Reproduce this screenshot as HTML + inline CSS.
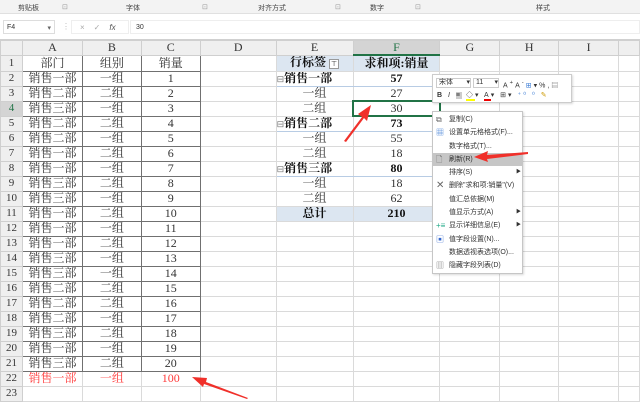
<!DOCTYPE html>
<html><head><meta charset="utf-8"><style>
*{margin:0;padding:0;box-sizing:border-box}
body{width:640px;height:406px;overflow:hidden;background:#fff;position:relative;font-family:"Liberation Serif","Noto Serif CJK SC",serif}
.rib{position:absolute;left:0;top:0;width:640px;height:14px;background:#f3f3f3;border-bottom:1px solid #e0e0e0;font:7px "Liberation Sans","Noto Sans CJK SC",sans-serif;color:#444}
.rib span{position:absolute;top:3px}
.fb{position:absolute;left:0;top:14px;width:640px;height:26px;background:#fff;border-bottom:1px solid #d0d0d0}
table{position:absolute;left:0;top:40px;border-collapse:collapse;table-layout:fixed}
td{height:15px;border:1px solid #dadada;font-size:12px;line-height:13px;text-align:center;color:#333;white-space:nowrap;overflow:hidden;padding:0;vertical-align:middle}
tr.h td{height:14px;background:#efefef;color:#333;border-color:#cfcfcf}
td.rh{background:#efefef;color:#333;border-color:#cfcfcf;font-size:11px}
.b{border:1px solid #707070}
.p{background:#dce6f1}
.bd{font-weight:bold;color:#111}
.L{text-align:left}
.r{color:#ff3b3b}
.menu{position:absolute;font:7px "Liberation Sans","Noto Sans CJK SC",sans-serif;color:#333}
</style></head><body>
<div class="rib"><span style="left:18px">剪贴板</span><span style="left:62px;color:#999">⊡</span><span style="left:126px">字体</span><span style="left:202px;color:#999">⊡</span><span style="left:258px">对齐方式</span><span style="left:335px;color:#999">⊡</span><span style="left:370px">数字</span><span style="left:415px;color:#999">⊡</span><span style="left:536px">样式</span></div>
<div class="fb">
<div style="position:absolute;left:3px;top:6px;width:52px;height:14px;border:1px solid #ddd;font:7px 'Liberation Sans',sans-serif;padding:3px 3px;color:#333">F4<span style="float:right;color:#666">▾</span></div>
<div style="position:absolute;left:62px;top:8px;font:8px sans-serif;color:#bbb">⋮</div>
<div style="position:absolute;left:71px;top:6px;width:58px;height:14px;border:1px solid #eee;font:8px sans-serif;color:#aaa;padding:2px 8px;letter-spacing:9px">×✓<i style="color:#555;letter-spacing:0">fx</i></div>
<div style="position:absolute;left:130px;top:6px;width:510px;height:14px;border:1px solid #eee;font:7px 'Liberation Sans',sans-serif;padding:3px 5px;color:#333">30</div>
</div>
<table>
<colgroup><col style="width:22px"><col style="width:60px"><col style="width:59px"><col style="width:59px"><col style="width:76px"><col style="width:77px"><col style="width:87px"><col style="width:60px"><col style="width:59px"><col style="width:60px"><col style="width:21px"></colgroup>
<tr class="h"><td></td><td>A</td><td>B</td><td>C</td><td>D</td><td>E</td><td style="background:#d4d4d4;color:#217346;border-bottom:2px solid #217346">F</td><td>G</td><td>H</td><td>I</td><td></td></tr>
<tr><td class="rh">1</td><td class="b">部门</td><td class="b">组别</td><td class="b">销量</td><td></td><td class="p bd">行标签 <span style="font-size:7px;border:1px solid #999;padding:0 1px;background:#fff;font-weight:normal">⊤</span></td><td class="p bd">求和项:销量</td><td></td><td></td><td></td><td></td></tr>
<tr><td class="rh">2</td><td class="b">销售一部</td><td class="b">一组</td><td class="b">1</td><td></td><td class="bd L" style="border-bottom:1px solid #b8cce4"><span style="font-size:9px;color:#777;font-weight:normal">⊟</span>销售一部</td><td class="bd" style="border-bottom:1px solid #b8cce4">57</td><td></td><td></td><td></td><td></td></tr>
<tr><td class="rh">3</td><td class="b">销售二部</td><td class="b">二组</td><td class="b">2</td><td></td><td>一组</td><td>27</td><td></td><td></td><td></td><td></td></tr>
<tr><td class="rh" style="color:#217346;background:#d4d4d4">4</td><td class="b">销售三部</td><td class="b">一组</td><td class="b">3</td><td></td><td>二组</td><td style="border:2px solid #217346">30</td><td></td><td></td><td></td><td></td></tr>
<tr><td class="rh">5</td><td class="b">销售二部</td><td class="b">二组</td><td class="b">4</td><td></td><td class="bd L" style="border-bottom:1px solid #b8cce4"><span style="font-size:9px;color:#777;font-weight:normal">⊟</span>销售二部</td><td class="bd" style="border-bottom:1px solid #b8cce4">73</td><td></td><td></td><td></td><td></td></tr>
<tr><td class="rh">6</td><td class="b">销售二部</td><td class="b">一组</td><td class="b">5</td><td></td><td>一组</td><td>55</td><td></td><td></td><td></td><td></td></tr>
<tr><td class="rh">7</td><td class="b">销售一部</td><td class="b">二组</td><td class="b">6</td><td></td><td>二组</td><td>18</td><td></td><td></td><td></td><td></td></tr>
<tr><td class="rh">8</td><td class="b">销售一部</td><td class="b">一组</td><td class="b">7</td><td></td><td class="bd L" style="border-bottom:1px solid #b8cce4"><span style="font-size:9px;color:#777;font-weight:normal">⊟</span>销售三部</td><td class="bd" style="border-bottom:1px solid #b8cce4">80</td><td></td><td></td><td></td><td></td></tr>
<tr><td class="rh">9</td><td class="b">销售三部</td><td class="b">二组</td><td class="b">8</td><td></td><td>一组</td><td>18</td><td></td><td></td><td></td><td></td></tr>
<tr><td class="rh">10</td><td class="b">销售三部</td><td class="b">一组</td><td class="b">9</td><td></td><td>二组</td><td>62</td><td></td><td></td><td></td><td></td></tr>
<tr><td class="rh">11</td><td class="b">销售一部</td><td class="b">二组</td><td class="b">10</td><td></td><td class="p bd" style="border-top:1px solid #95b3d7">总计</td><td class="p bd" style="border-top:1px solid #95b3d7">210</td><td></td><td></td><td></td><td></td></tr>
<tr><td class="rh">12</td><td class="b">销售一部</td><td class="b">一组</td><td class="b">11</td><td></td><td></td><td></td><td></td><td></td><td></td><td></td></tr>
<tr><td class="rh">13</td><td class="b">销售一部</td><td class="b">二组</td><td class="b">12</td><td></td><td></td><td></td><td></td><td></td><td></td><td></td></tr>
<tr><td class="rh">14</td><td class="b">销售三部</td><td class="b">一组</td><td class="b">13</td><td></td><td></td><td></td><td></td><td></td><td></td><td></td></tr>
<tr><td class="rh">15</td><td class="b">销售三部</td><td class="b">一组</td><td class="b">14</td><td></td><td></td><td></td><td></td><td></td><td></td><td></td></tr>
<tr><td class="rh">16</td><td class="b">销售二部</td><td class="b">二组</td><td class="b">15</td><td></td><td></td><td></td><td></td><td></td><td></td><td></td></tr>
<tr><td class="rh">17</td><td class="b">销售二部</td><td class="b">二组</td><td class="b">16</td><td></td><td></td><td></td><td></td><td></td><td></td><td></td></tr>
<tr><td class="rh">18</td><td class="b">销售二部</td><td class="b">一组</td><td class="b">17</td><td></td><td></td><td></td><td></td><td></td><td></td><td></td></tr>
<tr><td class="rh">19</td><td class="b">销售三部</td><td class="b">二组</td><td class="b">18</td><td></td><td></td><td></td><td></td><td></td><td></td><td></td></tr>
<tr><td class="rh">20</td><td class="b">销售一部</td><td class="b">一组</td><td class="b">19</td><td></td><td></td><td></td><td></td><td></td><td></td><td></td></tr>
<tr><td class="rh">21</td><td class="b">销售三部</td><td class="b">二组</td><td class="b">20</td><td></td><td></td><td></td><td></td><td></td><td></td><td></td></tr>
<tr><td class="rh">22</td><td class="r">销售一部</td><td class="r">一组</td><td class="r">100</td><td></td><td></td><td></td><td></td><td></td><td></td><td></td></tr>
<tr><td class="rh">23</td><td></td><td></td><td></td><td></td><td></td><td></td><td></td><td></td><td></td><td></td></tr>
</table>

<div class="menu" style="left:432px;top:74px;width:140px;height:29px;background:#fff;border:1px solid #ccc;box-shadow:1px 1px 2px rgba(0,0,0,.15);white-space:nowrap">
<div style="position:absolute;left:3px;top:3px;width:35px;height:10px;border:1px solid #ccc;padding-left:2px;line-height:8px">宋体<span style="float:right">▾</span></div>
<div style="position:absolute;left:40px;top:3px;width:26px;height:10px;border:1px solid #ccc;padding-left:2px;line-height:8px">11<span style="float:right">▾</span></div>
<div style="position:absolute;left:70px;top:3px;line-height:10px;letter-spacing:2px">A<sup>+</sup>A<sup>-</sup><span style="color:#3a7bd5">⊞</span>▾%,<span style="color:#666">▤</span></div>
<div style="position:absolute;left:4px;top:16px;line-height:10px;letter-spacing:2px"><b>B</b> <i>I</i> <span style="background:#ccc">≡</span> <span style="border-bottom:2px solid #ff0">◇</span>▾ <span style="border-bottom:2px solid #e00">A</span>▾ ⊞▾ <span style="color:#3a7bd5">⁺⁰</span> <span style="color:#3a7bd5">⁰</span> <span style="color:#c90">✎</span></div>
</div>
<div class="menu" style="left:432px;top:111px;width:91px;height:163px;background:#fff;border:1px solid #c6c6c6;box-shadow:1px 1px 2px rgba(0,0,0,.15);line-height:13.3px">
<div style="position:absolute;left:0;top:41px;width:89px;height:13px;background:#c6c6c6"></div>
<div style="position:absolute;left:16px;top:1px">
<div>复制(C)</div><div>设置单元格格式(F)...</div><div>数字格式(T)...</div><div>刷新(R)</div><div>排序(S)</div><div>删除"求和项:销量"(V)</div><div>值汇总依据(M)</div><div>值显示方式(A)</div><div>显示详细信息(E)</div><div>值字段设置(N)...</div><div>数据透视表选项(O)...</div><div>隐藏字段列表(D)</div>
</div>
<div style="position:absolute;left:3px;top:1px;color:#666;line-height:13.3px;font-size:8px">
<div>⧉</div><div style="color:#3a7bd5">▦</div><div>&nbsp;</div><div>🗋</div><div>&nbsp;</div><div style="font-size:10px">✕</div><div>&nbsp;</div><div>&nbsp;</div><div style="color:#2a8">+≡</div><div style="color:#36c">▣</div><div>&nbsp;</div><div>▥</div>
</div>
<div style="position:absolute;left:83px;top:54px;font-size:5px;line-height:13.3px">▶</div>
<div style="position:absolute;left:83px;top:94px;font-size:5px;line-height:13.3px">▶<br>▶</div>
</div>
<svg style="position:absolute;left:0;top:0" width="640" height="406">
<g fill="#f0302a">
<polygon points="344,141 362,117 358,114 371,105 367,121 364,118 346,142"/>
<polygon points="528,152 487,155 488,151 474,157 488,162 487,159 528,154"/>
<polygon points="248,398 206,382 207,378 192,377 203,387 204,384 247,399"/>
</g>
</svg>
</body></html>
